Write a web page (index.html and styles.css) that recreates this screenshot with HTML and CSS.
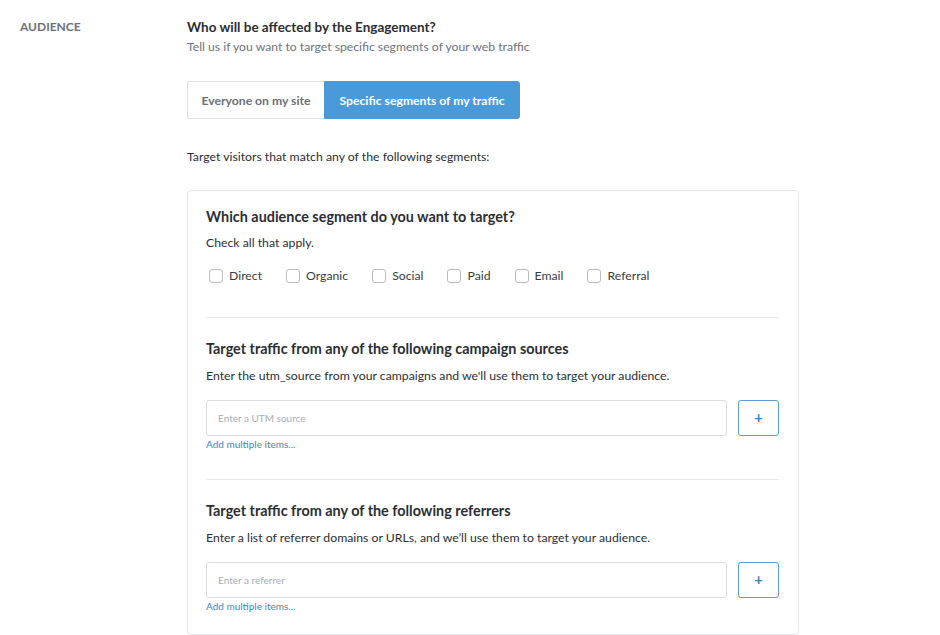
FILE: index.html
```html
<!DOCTYPE html>
<html>
<head>
<meta charset="utf-8">
<link rel="stylesheet" href="styles.css">
</head>
<body>
<div class="page">
  <div class="side-label">AUDIENCE</div>
  <div class="main">
    <h2 class="title">Who will be affected by the Engagement?</h2>
    <p class="subtitle">Tell us if you want to target specific segments of your web traffic</p>
    <div class="toggle">
      <button class="toggle-btn">Everyone on my site</button>
      <button class="toggle-btn active">Specific segments of my traffic</button>
    </div>
    <p class="intro">Target visitors that match any of the following segments:</p>
    <div class="card">
      <section class="section first">
        <h3 class="sec-title">Which audience segment do you want to target?</h3>
        <p class="sec-desc tight">Check all that apply.</p>
        <div class="checks">
          <label class="check"><span class="box"></span>Direct</label>
          <label class="check"><span class="box"></span>Organic</label>
          <label class="check"><span class="box"></span>Social</label>
          <label class="check"><span class="box"></span>Paid</label>
          <label class="check"><span class="box"></span>Email</label>
          <label class="check"><span class="box"></span>Referral</label>
        </div>
      </section>
      <section class="section">
        <h3 class="sec-title">Target traffic from any of the following campaign sources</h3>
        <p class="sec-desc">Enter the utm_source from your campaigns and we'll use them to target your audience.</p>
        <div class="input-row">
          <div class="input">Enter a UTM source</div>
          <div class="plus">+</div>
        </div>
        <a class="add-link">Add multiple items...</a>
      </section>
      <section class="section last">
        <h3 class="sec-title">Target traffic from any of the following referrers</h3>
        <p class="sec-desc">Enter a list of referrer domains or URLs, and we’ll use them to target your audience.</p>
        <div class="input-row">
          <div class="input">Enter a referrer</div>
          <div class="plus">+</div>
        </div>
        <a class="add-link">Add multiple items...</a>
      </section>
    </div>
  </div>
</div>
</body>
</html>
```
FILE: styles.css
```css
* { box-sizing: border-box; }
html, body { margin: 0; padding: 0; background: #fff; }
body {
  font-family: Lato, "Open Sans", Arial, sans-serif;
  color: #2b2e33;
  -webkit-font-smoothing: antialiased;
}
.page {
  display: flex;
  padding-top: 18px;
}
.side-label {
  width: 187px;
  padding-left: 20px;
  font-size: 12px;
  font-weight: 700;
  color: #6b7079;
  line-height: 18px;
}
.main {
  width: 612px;
}
.title {
  margin: 0;
  font-size: 13.5px;
  line-height: 18px;
  font-weight: 700;
  color: #2b2e33;
}
.subtitle {
  margin: 3px 0 0;
  font-size: 12.2px;
  line-height: 16px;
  color: #6d7380;
}
.toggle {
  display: flex;
  margin-top: 26px;
  height: 38px;
}
.toggle-btn {
  font-family: inherit;
  font-size: 12.2px;
  font-weight: 700;
  border: 1px solid #dcdfe3;
  background: #fff;
  color: #6b7079;
  padding: 0;
  margin: 0;
  height: 38px;
}
.toggle-btn:first-child {
  width: 137px;
  border-right: none;
  border-radius: 3px 0 0 3px;
}
.toggle-btn.active {
  width: 196px;
  background: #4a9ad9;
  border-color: #4a9ad9;
  color: #fff;
  border-radius: 0 3px 3px 0;
}
.intro {
  margin: 30px 0 0;
  font-size: 12.25px;
  line-height: 16px;
  color: #2b2e33;
}
.card {
  margin-top: 25px;
  border: 1px solid #e4e6e9;
  border-radius: 4px;
  padding: 0 19px 0 18px;
}
.section {
  padding: 22px 0 29px;
  border-bottom: 1px solid #e8eaec;
}
.section.first { padding-top: 17px; padding-bottom: 33px; }
.section.last { border-bottom: none; padding-bottom: 22px; }
.sec-title {
  margin: 0;
  font-size: 14.4px;
  line-height: 18px;
  font-weight: 700;
  color: #2b2e33;
}
.sec-desc {
  margin: 10px 0 0;
  font-size: 12.25px;
  line-height: 16px;
  color: #2b2e33;
}
.sec-desc.tight { margin-top: 9px; }
.checks {
  display: flex;
  margin-top: 17px;
  padding-left: 3px;
  height: 16px;
  align-items: center;
}
.check {
  display: flex;
  align-items: center;
  font-size: 12.25px;
  line-height: 16px;
  color: #3a3d42;
  margin-right: 24px;
}
.box {
  width: 14px;
  height: 14px;
  border: 1px solid #b9bcc0;
  border-radius: 3px;
  margin-right: 6px;
  background: #fff;
}
.input-row {
  display: flex;
  margin-top: 16px;
  gap: 11px;
}
.input {
  flex: 1;
  height: 36px;
  border: 1px solid #dadcdf;
  border-radius: 3px;
  padding-left: 11px;
  font-size: 10px;
  line-height: 34px;
  color: #a9adb3;
}
.plus {
  width: 41px;
  height: 36px;
  border: 1px solid #5b9dd6;
  border-radius: 3px;
  text-align: center;
  font-size: 15px;
  font-weight: 700;
  line-height: 33px;
  color: #3b82c4;
}
.add-link {
  display: block;
  margin-top: 2px;
  font-size: 10px;
  line-height: 12px;
  color: #3a87c8;
}
```
